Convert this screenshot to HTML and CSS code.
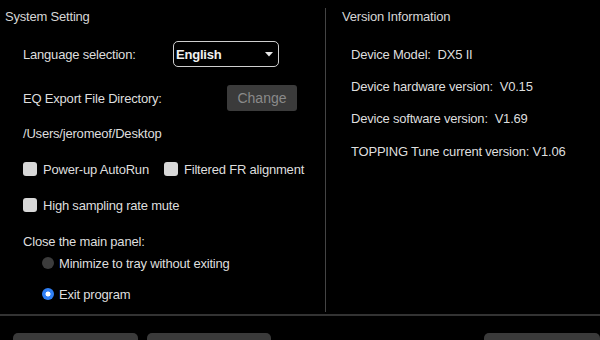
FILE: index.html
```html
<!DOCTYPE html>
<html>
<head>
<meta charset="utf-8">
<link rel="stylesheet" href="styles.css">
</head>
<body>
<div class="main">
  <section class="left">
    <div class="title">System Setting</div>
    <div class="row lang">
      <span class="label lang-label">Language selection:</span>
      <div class="select">
        <span class="select-text">English</span>
        <svg class="arrow" width="8" height="5" viewBox="0 0 8 5"><path d="M0 0 H8 L4 4.5 Z" fill="#e8e8e8"/></svg>
      </div>
    </div>
    <div class="row eq">
      <span class="label eq-label">EQ Export File Directory:</span>
      <button class="change">Change</button>
    </div>
    <div class="row path">/Users/jeromeof/Desktop</div>
    <div class="row checks">
      <label class="check first"><span class="box"></span>Power-up AutoRun</label>
      <label class="check"><span class="box"></span>Filtered FR alignment</label>
    </div>
    <div class="row checks2">
      <label class="check"><span class="box"></span>High sampling rate mute</label>
    </div>
    <div class="row close">Close the main panel:</div>
    <div class="row radio r1"><span class="dot off"></span>Minimize to tray without exiting</div>
    <div class="row radio r2"><span class="dot on"></span>Exit program</div>
  </section>
  <div class="divider"></div>
  <section class="right">
    <div class="title">Version Information</div>
    <div class="info i1">Device Model:&nbsp; DX5 II</div>
    <div class="info i2">Device hardware version:&nbsp; V0.15</div>
    <div class="info i3">Device software version:&nbsp; V1.69</div>
    <div class="info i4">TOPPING Tune current version: V1.06</div>
  </section>
</div>
<div class="footer">
  <div class="fbtn b1"></div>
  <div class="fbtn b2"></div>
  <div class="spacer"></div>
  <div class="fbtn b3"></div>
</div>
</body>
</html>
```

FILE: styles.css
```css
html, body {
  margin: 0;
  padding: 0;
  background: #000;
  width: 600px;
  height: 340px;
  overflow: hidden;
}
body {
  font-family: "Liberation Sans", Arial, sans-serif;
  font-size: 13px;
  letter-spacing: -0.2px;
  color: #dedede;
}
.main {
  display: flex;
  height: 316px;
  border-bottom: 2px solid #333;
  box-sizing: border-box;
}
.left {
  width: 325px;
  display: flex;
  flex-direction: column;
}
.title {
  height: 34px;
  line-height: 34px;
  color: #d6d6d6;
}
.left .title {
  padding-left: 5px;
}
.row {
  display: flex;
  align-items: center;
  padding-left: 23px;
  height: 20px;
}
.lang { margin-top: 7px; height: 26px; }
.lang-label { width: 150px; }
.select {
  width: 106px;
  height: 26px;
  box-sizing: border-box;
  border: 1.5px solid #cfcfcf;
  border-radius: 5px;
  display: flex;
  align-items: center;
  justify-content: space-between;
  padding: 0 5px 0 2px;
}
.select-text {
  font-weight: bold;
  color: #f0f0f0;
}
.arrow { display: block; }
.eq { margin-top: 18px; height: 26px; }
.eq-label { width: 204px; }
.change {
  width: 70px;
  height: 26px;
  border: none;
  border-radius: 3px;
  background: #3b3b3b;
  color: #8a8a8a;
  font-family: inherit;
  font-size: 14px;
  padding: 0;
}
.path { margin-top: 12px; }
.checks { margin-top: 16px; }
.checks2 { margin-top: 16px; }
.check {
  display: flex;
  align-items: center;
}
.check.first { width: 141px; }
.box {
  width: 14px;
  height: 14px;
  border-radius: 3px;
  background: #d8d8d8;
  margin-right: 6px;
}
.close { margin-top: 16px; }
.radio { padding-left: 42px; }
.r1 { margin-top: 2px; }
.r2 { margin-top: 11px; }
.dot {
  width: 12px;
  height: 12px;
  border-radius: 50%;
  margin-right: 5px;
  box-sizing: border-box;
}
.dot.off {
  background: #3c3c3c;
}
.dot.on {
  background: radial-gradient(circle, #ffffff 0 2.2px, #2f7ff5 2.8px);
}
.divider {
  width: 1px;
  background: #444;
  margin: 8px 0 2px;
}
.right {
  flex: 1;
  padding-left: 16px;
  display: flex;
  flex-direction: column;
}
.info {
  padding-left: 9px;
  height: 20px;
  line-height: 20px;
}
.i1 { margin-top: 11px; }
.i2 { margin-top: 12px; }
.i3 { margin-top: 12px; }
.i4 { margin-top: 13px; }
.footer {
  display: flex;
  height: 24px;
  box-sizing: border-box;
  padding: 17px 0 0 13px;
  gap: 9px;
  overflow: hidden;
}
.fbtn {
  height: 7px;
  background: #3a3a3a;
  border-radius: 5px 5px 0 0;
}
.b1 { width: 125px; }
.b2 { width: 124px; }
.spacer { flex: 1; }
.b3 { width: 116px; margin-left: -9px; }
```
